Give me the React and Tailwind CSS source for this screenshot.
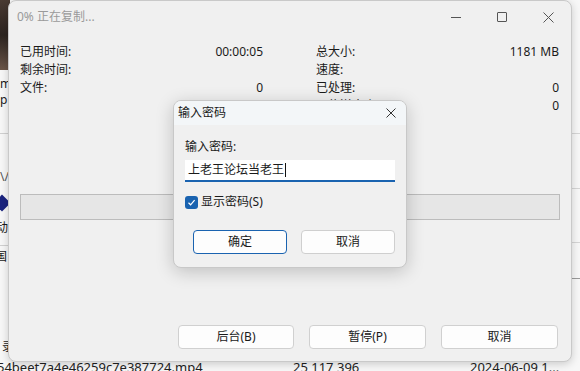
import React from "react";

const font = { fontFamily: '"Noto Sans", "Noto Sans CJK SC", sans-serif' };

function Row({ l, v, r, rv }) {
  return (
    <div className="flex h-[18px] items-center">
      <div className="flex w-[243px] justify-between">
        <span>{l}</span>
        <span>{v}</span>
      </div>
      <div className="ml-[53px] flex w-[243px] justify-between">
        <span>{r}</span>
        <span>{rv}</span>
      </div>
    </div>
  );
}

export default function App() {
  return (
    <div
      className="relative h-[371px] w-[580px] overflow-hidden bg-[#f7f7f7] text-[12px] text-[#1a1a1a]"
      style={font}
    >
      {/* background desktop content */}
      <div className="absolute left-0 top-0 h-[70px] w-[10px] bg-gradient-to-b from-[#4a3b33] via-[#2c2420] to-[#6b5648]" />
      <div className="absolute left-0 top-[76px] text-[12px] leading-[16px]">m</div>
      <div className="absolute left-0 top-[92px] text-[12px] leading-[16px]">p</div>
      <div className="absolute left-0 top-[133px] h-px w-[10px] bg-[#d0d0d0]" />
      <div className="absolute left-0 top-[168px] text-[12px] text-[#555]">\/</div>
      <div className="absolute left-[-4px] top-[197px] h-[12px] w-[12px] rotate-45 bg-[#1a237e]" />
      <div className="absolute left-[-4px] top-[219px] text-[12px]">动</div>
      <div className="absolute left-0 top-[245px] h-px w-[10px] bg-[#d0d0d0]" />
      <div className="absolute left-[-5px] top-[248px] text-[12px]">国</div>
      <div className="absolute left-[2px] top-[338px] text-[12px]">录</div>
      <div className="absolute left-[572px] top-[133px] h-px w-[8px] bg-[#d5d5d5]" />
      <div className="absolute left-[572px] top-[188px] h-px w-[8px] bg-[#d5d5d5]" />
      <div className="absolute left-[572px] top-[242px] h-px w-[8px] bg-[#d5d5d5]" />
      <div className="absolute left-[572px] top-[278px] h-px w-[8px] bg-[#9a9a9a]" />
      <div className="absolute left-[-3px] top-[359px] text-[13px] leading-[16px] text-[#222]">
        54beet7a4e46259c7e387724.mp4
      </div>
      <div className="absolute left-[293px] top-[359px] text-[13px] leading-[16px] text-[#222]">
        25 117 396
      </div>
      <div className="absolute left-[470px] top-[359px] text-[13px] leading-[16px] text-[#222]">
        2024-06-09 1...
      </div>

      {/* main copy window */}
      <div className="absolute left-[8px] top-[0px] flex h-[362px] w-[564px] flex-col rounded-[8px] border border-[#c9c9c9] bg-[#f0f0f0] shadow-[0_2px_8px_rgba(0,0,0,0.18)]">
        <div className="flex h-[32px] items-center pl-[8px]">
          <span className="text-[12px] text-[#9a9a9a]">0% 正在复制...</span>
          <div className="ml-auto flex h-full items-center">
            <div className="flex h-full w-[46px] items-center justify-center">
              <div className="h-px w-[10px] bg-[#555]" />
            </div>
            <div className="flex h-full w-[46px] items-center justify-center">
              <div className="h-[10px] w-[10px] rounded-[1px] border border-[#555]" />
            </div>
            <div className="flex h-full w-[46px] items-center justify-center">
              <svg width="11" height="11" viewBox="0 0 11 11">
                <path d="M0.5 0.5 L10.5 10.5 M10.5 0.5 L0.5 10.5" stroke="#555" strokeWidth="1" />
              </svg>
            </div>
          </div>
        </div>
        <div className="mt-[10px] pl-[11px] leading-[18px]">
          <Row l="已用时间:" v="00:00:05" r="总大小:" rv="1181 MB" />
          <Row l="剩余时间:" v="" r="速度:" rv="" />
          <Row l="文件:" v="0" r="已处理:" rv="0" />
          <Row l="" v="" r="已传送大小:" rv="0" />
        </div>
        <div className="ml-[11px] mt-[79px] h-[26px] w-[540px] border border-[#bcbcbc] bg-[#e6e6e6]" />
        <div className="ml-auto mr-[13px] mt-[105px] flex gap-[15px]">
          <button className="h-[24px] w-[116px] rounded-[4px] border border-[#d0d0d0] bg-[#fdfdfd] text-[12px] text-[#1a1a1a]">
            后台(B)
          </button>
          <button className="h-[24px] w-[117px] rounded-[4px] border border-[#d0d0d0] bg-[#fdfdfd] text-[12px] text-[#1a1a1a]">
            暂停(P)
          </button>
          <button className="h-[24px] w-[117px] rounded-[4px] border border-[#d0d0d0] bg-[#fdfdfd] text-[12px] text-[#1a1a1a]">
            取消
          </button>
        </div>
      </div>

      {/* password dialog */}
      <div className="absolute left-[173px] top-[100px] flex h-[168px] w-[234px] flex-col overflow-hidden rounded-[8px] border border-[#c8c8c8] bg-[#f0f0f0] shadow-[0_4px_18px_rgba(0,0,0,0.2)]">
        <div className="flex h-[24px] items-center bg-[#f3f6f8] pl-[4px]">
          <span className="text-[12px] text-[#1a1a1a]">输入密码</span>
          <svg className="ml-auto mr-[10px]" width="10" height="10" viewBox="0 0 10 10">
            <path d="M0.5 0.5 L9.5 9.5 M9.5 0.5 L0.5 9.5" stroke="#333" strokeWidth="1" />
          </svg>
        </div>
        <div className="flex flex-col px-[11px]">
          <div className="mt-[13px] leading-[18px]">输入密码:</div>
          <div className="mt-[4px] flex h-[22px] w-[210px] items-center border-b-2 border-[#1a63b0] bg-white pl-[3px] text-[12px]">
            上老王论坛当老王
            <span className="ml-[1px] inline-block h-[14px] w-px bg-[#111]" />
          </div>
          <div className="mt-[11px] flex items-center">
            <div className="flex h-[13px] w-[13px] items-center justify-center rounded-[3px] bg-[#1a63b0]">
              <svg width="9" height="9" viewBox="0 0 9 9">
                <path d="M1.5 4.8 L3.6 6.8 L7.6 2.2" stroke="white" strokeWidth="1.2" fill="none" />
              </svg>
            </div>
            <span className="ml-[3px]">显示密码(S)</span>
          </div>
          <div className="mt-[19px] flex pl-[8px]">
            <button className="h-[24px] w-[94px] rounded-[4px] border border-[#1a63b0] bg-[#fdfdfd] text-[12px]">
              确定
            </button>
            <button className="ml-[14px] h-[24px] w-[94px] rounded-[4px] border border-[#cfcfcf] bg-[#fdfdfd] text-[12px]">
              取消
            </button>
          </div>
        </div>
      </div>
    </div>
  );
}
